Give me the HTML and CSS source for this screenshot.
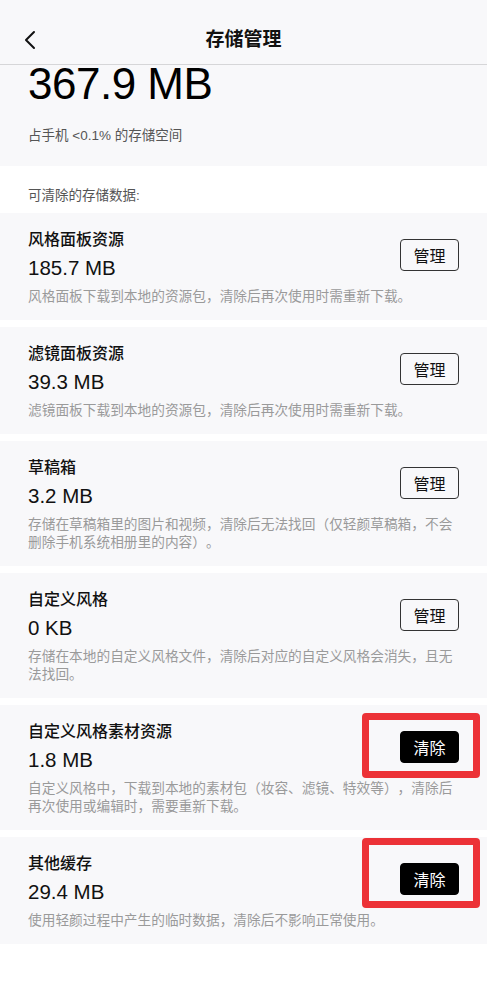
FILE: index.html
```html
<!DOCTYPE html>
<html lang="zh-CN">
<head>
<meta charset="utf-8">
<title>存储管理</title>
<link rel="stylesheet" href="styles.css">
</head>
<body>
<header class="topbar">
  <span class="back">
    <svg width="14" height="20" viewBox="0 0 14 20"><polyline points="11,2 3,10 11,18" fill="none" stroke="#111" stroke-width="2" stroke-linecap="round" stroke-linejoin="round"/></svg>
  </span>
  <h1 class="title">存储管理</h1>
</header>
<section class="summary">
  <div class="total">367.9 MB</div>
  <div class="ratio">占手机 &lt;0.1% 的存储空间</div>
</section>
<div class="label">可清除的存储数据:</div>
<div class="list">
  <div class="card">
    <div class="info">
      <div class="name">风格面板资源</div>
      <div class="size">185.7 MB</div>
      <div class="desc">风格面板下载到本地的资源包，清除后再次使用时需重新下载。</div>
    </div>
    <button class="btn btn-outline">管理</button>
  </div>
  <div class="card">
    <div class="info">
      <div class="name">滤镜面板资源</div>
      <div class="size">39.3 MB</div>
      <div class="desc">滤镜面板下载到本地的资源包，清除后再次使用时需重新下载。</div>
    </div>
    <button class="btn btn-outline">管理</button>
  </div>
  <div class="card">
    <div class="info">
      <div class="name">草稿箱</div>
      <div class="size">3.2 MB</div>
      <div class="desc">存储在草稿箱里的图片和视频，清除后无法找回（仅轻颜草稿箱，不会删除手机系统相册里的内容）。</div>
    </div>
    <button class="btn btn-outline">管理</button>
  </div>
  <div class="card">
    <div class="info">
      <div class="name">自定义风格</div>
      <div class="size">0 KB</div>
      <div class="desc">存储在本地的自定义风格文件，清除后对应的自定义风格会消失，且无法找回。</div>
    </div>
    <button class="btn btn-outline">管理</button>
  </div>
  <div class="card">
    <div class="info">
      <div class="name">自定义风格素材资源</div>
      <div class="size">1.8 MB</div>
      <div class="desc">自定义风格中，下载到本地的素材包（妆容、滤镜、特效等），清除后再次使用或编辑时，需要重新下载。</div>
    </div>
    <button class="btn btn-solid">清除</button>
    <span class="mark mark-a"></span>
  </div>
  <div class="card">
    <div class="info">
      <div class="name">其他缓存</div>
      <div class="size">29.4 MB</div>
      <div class="desc">使用轻颜过程中产生的临时数据，清除后不影响正常使用。</div>
    </div>
    <button class="btn btn-solid">清除</button>
    <span class="mark mark-b"></span>
  </div>
</div>
</body>
</html>
```
FILE: styles.css
```css
* { box-sizing: border-box; }
html, body { margin: 0; padding: 0; }
body {
  width: 487px;
  background: #fff;
  font-family: "Liberation Sans", "Noto Sans CJK SC", sans-serif;
  color: #111;
  text-spacing-trim: space-all;
}
.topbar {
  height: 65px;
  background: #f8f8fa;
  border-bottom: 1px solid #d6d6d8;
  display: flex;
  align-items: flex-start;
  justify-content: center;
  position: relative;
}
.back {
  position: absolute;
  left: 23px;
  top: 30px;
  display: block;
  width: 14px;
  height: 20px;
}
.back svg { display: block; }
.title {
  margin: 0;
  font-size: 19px;
  font-weight: 700;
  line-height: 24px;
  padding-top: 28px;
  color: #111;
}
.summary {
  background: #f8f8fa;
  padding: 0 28px 20px;
}
.total {
  font-size: 44px;
  line-height: 38px;
  letter-spacing: -0.5px;
  color: #000;
}
.ratio {
  margin-top: 23px;
  font-size: 13.5px;
  line-height: 20px;
  color: #555;
}
.label {
  padding: 20px 28px 7px;
  font-size: 13.5px;
  line-height: 20px;
  color: #555;
}
.list {
  display: flex;
  flex-direction: column;
  gap: 7px;
}
.card {
  position: relative;
  background: #f8f8fa;
  padding: 17px 28px 14px;
  display: flex;
  align-items: flex-start;
}
.info { flex: 1; min-width: 0; }
.name {
  font-size: 16px;
  line-height: 20px;
  font-weight: 500;
  color: #111;
}
.size {
  margin-top: 4px;
  font-size: 20.5px;
  line-height: 28px;
  color: #111;
}
.desc {
  margin-top: 6px;
  font-size: 13.7px;
  line-height: 18px;
  color: #9a9a9a;
  margin-right: -431px;
  width: 431px;
}
.btn {
  position: relative;
  z-index: 1;
  margin-top: 9px;
  width: 59px;
  height: 32px;
  border-radius: 4px;
  font-family: "Noto Sans CJK SC", sans-serif;
  font-size: 16px;
  padding: 0;
  flex: none;
}
.btn-outline {
  background: transparent;
  border: 1px solid #333;
  color: #111;
}
.btn-solid {
  background: #000;
  border: 1px solid #000;
  color: #fff;
}
.mark {
  position: absolute;
  right: 7px;
  width: 118px;
  border: 7px solid #ec3237;
  border-radius: 4px;
  z-index: 2;
}
.mark-a { top: 8px; height: 65px; }
.mark-b { top: 1px; height: 70px; }
```
